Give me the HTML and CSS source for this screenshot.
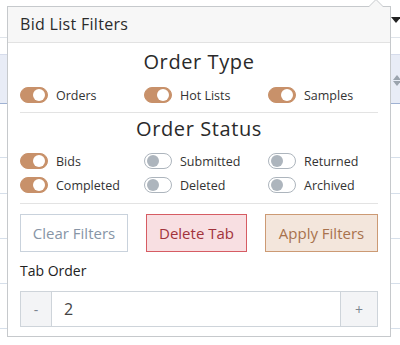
FILE: index.html
```html
<!DOCTYPE html>
<html>
<head>
<meta charset="utf-8">
<link rel="stylesheet" href="styles.css">
</head>
<body>
<div class="page">
  <div class="bg-table">
    <div class="bg-row r0"><span class="sort-dark"></span></div>
    <div class="bg-gap"></div>
    <div class="bg-head"><span class="sort-gray"><i class="up"></i><i class="down"></i></span></div>
    <div class="bg-row r1"></div>
    <div class="bg-row r2"></div>
    <div class="bg-row r3"></div>
    <div class="bg-row r4"></div>
    <div class="bg-row r5"></div>
  </div>

  <div class="popover">
    <div class="pop-arrow"></div>
    <div class="pop-header">Bid List Filters</div>
    <div class="pop-body">
      <h3 class="section-title">Order Type</h3>
      <div class="switch-grid first">
        <label class="switch"><span class="track on"></span>Orders</label>
        <label class="switch"><span class="track on"></span>Hot Lists</label>
        <label class="switch"><span class="track on"></span>Samples</label>
      </div>
      <div class="divider d1"></div>
      <h3 class="section-title">Order Status</h3>
      <div class="switch-grid second">
        <label class="switch"><span class="track on"></span>Bids</label>
        <label class="switch"><span class="track"></span>Submitted</label>
        <label class="switch"><span class="track"></span>Returned</label>
        <label class="switch"><span class="track on"></span>Completed</label>
        <label class="switch"><span class="track"></span>Deleted</label>
        <label class="switch"><span class="track"></span>Archived</label>
      </div>
      <div class="divider d2"></div>
      <div class="actions">
        <button class="btn btn-clear">Clear Filters</button>
        <button class="btn btn-delete">Delete Tab</button>
        <button class="btn btn-apply">Apply Filters</button>
      </div>
      <div class="field-label">Tab Order</div>
      <div class="input-group">
        <button class="step minus">-</button>
        <div class="value">2</div>
        <button class="step plus">+</button>
      </div>
    </div>
  </div>
</div>
</body>
</html>
```

FILE: styles.css
```css
* { box-sizing: border-box; }
html, body { margin: 0; padding: 0; background: #fff; }
body {
  font-family: "Open Sans", "Noto Sans", sans-serif;
  width: 400px;
  height: 345px;
  overflow: hidden;
}
.page { position: relative; width: 400px; height: 345px; }

/* background table */
.bg-table { display: flex; flex-direction: column; }
.bg-row { border-bottom: 1px solid #d6dfea; position: relative; }
.r0 { height: 38px; border-bottom-color: #dfe4ea; }
.bg-gap { height: 16px; }
.bg-head {
  height: 50px;
  background: #e8ecf6;
  border-top: 1px solid #d6dceb;
  border-bottom: 1px solid #9fb2d3;
  position: relative;
}
.r1 { height: 54px; }
.r2 { height: 36px; }
.r3 { height: 45px; }
.r4 { height: 45px; }
.r5 { height: 45px; }
.sort-dark {
  position: absolute; left: 391px; top: 17px;
  width: 0; height: 0;
  border-left: 5px solid transparent;
  border-right: 5px solid transparent;
  border-top: 6px solid #222;
}
.sort-gray { position: absolute; left: 393px; top: 20px; }
.sort-gray i { display: block; width: 0; height: 0; border-left: 4px solid transparent; border-right: 4px solid transparent; }
.sort-gray .up { border-bottom: 5px solid #9aa3ad; margin-bottom: 1px; }
.sort-gray .down { border-top: 5px solid #9aa3ad; }

/* popover */
.popover {
  position: absolute;
  left: 7px; top: 6px;
  width: 384px; height: 331px;
  background: #fff;
  border: 1px solid #c6c9cc;
}
.pop-arrow {
  position: absolute;
  right: 0px; top: -8px;
  width: 0; height: 0;
  border-left: 8px solid transparent;
  border-right: 8px solid transparent;
  border-bottom: 8px solid #c6c9cc;
  transform: translateX(-6px);
}
.pop-arrow::after {
  content: "";
  position: absolute;
  left: -7px; top: 1px;
  border-left: 7px solid transparent;
  border-right: 7px solid transparent;
  border-bottom: 7px solid #f7f7f7;
}
.pop-header {
  height: 36px;
  background: #f7f7f7;
  border-bottom: 1px solid #e2e2e2;
  padding: 0 12px;
  font-size: 16px;
  line-height: 34px;
  color: #2b2b2b;
  letter-spacing: 0.3px;
}
.pop-body { padding: 7px 12px 0; }
.section-title {
  margin: 0;
  text-align: center;
  font-weight: 400;
  font-size: 20px;
  line-height: 24px;
  color: #2a2a2a;
  letter-spacing: 0.6px;
}
.switch-grid {
  display: grid;
  grid-template-columns: 124px 124px 1fr;
}
.switch-grid.first { margin-top: 9px; }
.switch-grid.second { margin-top: 8px; }
.switch {
  display: flex;
  align-items: center;
  height: 24px;
  font-size: 12.5px;
  color: #333;
}
.track {
  position: relative;
  width: 28px; height: 16px;
  border-radius: 8px;
  border: 1px solid #adb5bd;
  background: #fff;
  margin-right: 8px;
  flex: none;
}
.track::after {
  content: "";
  position: absolute;
  left: 2px; top: 1px;
  width: 12px; height: 12px;
  border-radius: 50%;
  background: #adb5bd;
}
.track.on { background: #c8916a; border-color: #c8916a; }
.track.on::after { left: 12px; background: #fff; }
.divider {
  height: 1px;
  background: #e3e3e3;
}
.d1 { margin: 5px 0 4px; }
.d2 { margin: 6px 0 0; }
.actions {
  display: flex;
  justify-content: space-between;
  margin-top: 10px;
}
.btn {
  height: 38px;
  font-family: inherit;
  font-size: 15px;
  padding: 0;
  border: 1px solid;
  border-radius: 0;
  background: #fff;
}
.btn-clear { width: 108px; color: #8795a6; border-color: #c9d2dc; }
.btn-delete { width: 101px; color: #a2333c; background: #f8dfe2; border-color: #d65c63; }
.btn-apply { width: 113px; color: #a8724d; background: #f3e6dc; border-color: #cc9a74; }
.field-label {
  margin-top: 9px;
  font-size: 14px;
  line-height: 20px;
  color: #222;
}
.input-group {
  display: flex;
  margin-top: 10px;
  height: 36px;
  border: 1px solid #ced4da;
}
.step {
  border: 0;
  background: #f3f4f6;
  font-family: inherit;
  font-size: 14px;
  color: #7b8590;
  padding: 0;
}
.minus { width: 31px; border-right: 1px solid #ced4da; }
.plus { width: 37px; border-left: 1px solid #ced4da; }
.value {
  flex: 1;
  padding-left: 12px;
  line-height: 34px;
  font-size: 16px;
  color: #444;
}
```
